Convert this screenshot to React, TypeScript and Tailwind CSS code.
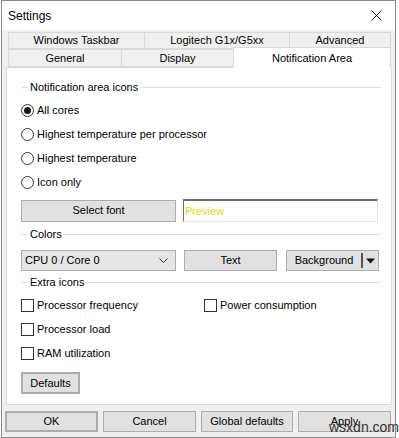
import type { ReactNode } from "react";

const Legend = ({ label }: { label: string }) => (
  <div className="flex h-[16px] items-center pr-[10px]">
    <div className="h-px w-[7px] bg-[#dcdcdc]" />
    <span className="px-[2px]">{label}</span>
    <div className="h-px flex-1 bg-[#dcdcdc]" />
  </div>
);

const Radio = ({ label, checked }: { label: string; checked?: boolean }) => (
  <div className="flex h-[24px] items-center">
    <div className="flex h-[13px] w-[13px] items-center justify-center rounded-full border border-[#333] bg-white">
      {checked && <div className="h-[7px] w-[7px] rounded-full bg-[#1a1a1a]" />}
    </div>
    <span className="ml-[3px]">{label}</span>
  </div>
);

const Check = ({ label }: { label: string }) => (
  <div className="flex h-[24px] items-center">
    <div className="h-[13px] w-[13px] border border-[#333] bg-white" />
    <span className="ml-[3px]">{label}</span>
  </div>
);

const Btn = ({ children, className = "" }: { children: ReactNode; className?: string }) => (
  <div
    className={`flex items-center justify-center border border-[#adadad] bg-[#e1e1e1] ${className}`}
  >
    {children}
  </div>
);

const Tab = ({ label, w }: { label: string; w: string }) => (
  <div className={`flex h-full items-center justify-center border border-[#d9d9d9] bg-[#f0f0f0] -ml-px first:ml-0 ${w}`}>
    {label}
  </div>
);

export default function App() {
  return (
    <div className="relative h-[438px] w-[399px] bg-white font-['Liberation_Sans',Arial,sans-serif] text-[11px] leading-none text-black">
      <div className="ml-px flex h-[438px] w-[395px] flex-col border border-[#8a8a8a] bg-[#f0f0f0]">
        {/* title bar */}
        <div className="flex h-[29px] items-center justify-between bg-white pl-[6px] pr-[8px]">
          <span className="text-[12px]">Settings</span>
          <svg width="11" height="11" viewBox="0 0 11 11" className="mr-[5px]">
            <path d="M0.5 0.5 L10.5 10.5 M10.5 0.5 L0.5 10.5" stroke="#111" strokeWidth="1" />
          </svg>
        </div>

        {/* tabs */}
        <div className="px-[4px]">
          <div className="mt-[2px] ml-[2px] flex h-[17px]">
            <Tab label="Windows Taskbar" w="w-[137px]" />
            <Tab label="Logitech G1x/G5xx" w="w-[146px]" />
            <Tab label="Advanced" w="w-[102px]" />
          </div>
          <div className="ml-[2px] flex h-[18px] items-end">
            <Tab label="General" w="w-[114px]" />
            <Tab label="Display" w="w-[113px]" />
            <div className="relative z-10 -mb-px -ml-px flex h-[21px] w-[158px] items-start justify-center border border-b-0 border-[#d9d9d9] bg-white pt-[5px]">
              Notification Area
            </div>
          </div>

          {/* panel */}
          <div className="h-[338px] w-[386px] border border-[#d9d9d9] bg-white pl-[14px] pt-[11px]">
            <Legend label="Notification area icons" />
            <div className="mt-[3px]">
              <Radio label="All cores" checked />
              <Radio label="Highest temperature per processor" />
              <Radio label="Highest temperature" />
              <Radio label="Icon only" />
            </div>
            <div className="mt-[5px] flex items-center">
              <Btn className="h-[22px] w-[155px]">Select font</Btn>
              <div className="ml-[7px] flex h-[23px] w-[195px] items-center border-t-2 border-l border-r border-b border-t-[#6d6d6d] border-l-[#6d6d6d] border-r-[#e3e3e3] border-b-[#e3e3e3] bg-white pl-[1px] text-[#e3d900]">
                Preview
              </div>
            </div>

            <div className="mt-[4px]">
              <Legend label="Colors" />
            </div>
            <div className="mt-[8px] flex items-center">
              <div className="flex h-[21px] w-[155px] items-center justify-between border border-[#adadad] bg-[#e5e5e5] pl-[3px] pr-[7px]">
                <span>CPU 0 / Core 0</span>
                <svg width="9" height="5" viewBox="0 0 9 5">
                  <path d="M0.5 0.5 L4.5 4.5 L8.5 0.5" fill="none" stroke="#333" strokeWidth="1" />
                </svg>
              </div>
              <Btn className="ml-[8px] h-[21px] w-[93px]">Text</Btn>
              <div className="ml-[9px] flex h-[21px] w-[93px] items-center border border-[#adadad] bg-[#e1e1e1]">
                <span className="flex-1 text-center">Background</span>
                <div className="h-[15px] w-[2px] bg-[#555]" />
                <svg width="11" height="6" viewBox="0 0 11 6" className="mx-[2px]">
                  <path d="M1 0.5 L10 0.5 L5.5 5.5 Z" fill="#111" />
                </svg>
              </div>
            </div>

            <div className="mt-[3px]">
              <Legend label="Extra icons" />
            </div>
            <div className="mt-[3px] flex">
              <div className="w-[183px]">
                <Check label="Processor frequency" />
                <Check label="Processor load" />
                <Check label="RAM utilization" />
              </div>
              <Check label="Power consumption" />
            </div>
            <Btn className="mt-[7px] h-[22px] w-[59px] border-2 border-[#0078d7]">Defaults</Btn>
          </div>
        </div>

        {/* bottom buttons */}
        <div className="mt-[6px] flex gap-[5px] pl-[3px]">
          <Btn className="h-[21px] w-[93px] border-2 border-[#0078d7]">OK</Btn>
          <Btn className="h-[21px] w-[93px]">Cancel</Btn>
          <Btn className="h-[21px] w-[92px]">Global defaults</Btn>
          <Btn className="h-[21px] w-[93px]">Apply</Btn>
        </div>
      </div>
      <span className="absolute left-[329px] top-[420px] font-['Liberation_Sans',sans-serif] text-[14px] text-[#333]">
        wsxdn.com
      </span>
    </div>
  );
}
